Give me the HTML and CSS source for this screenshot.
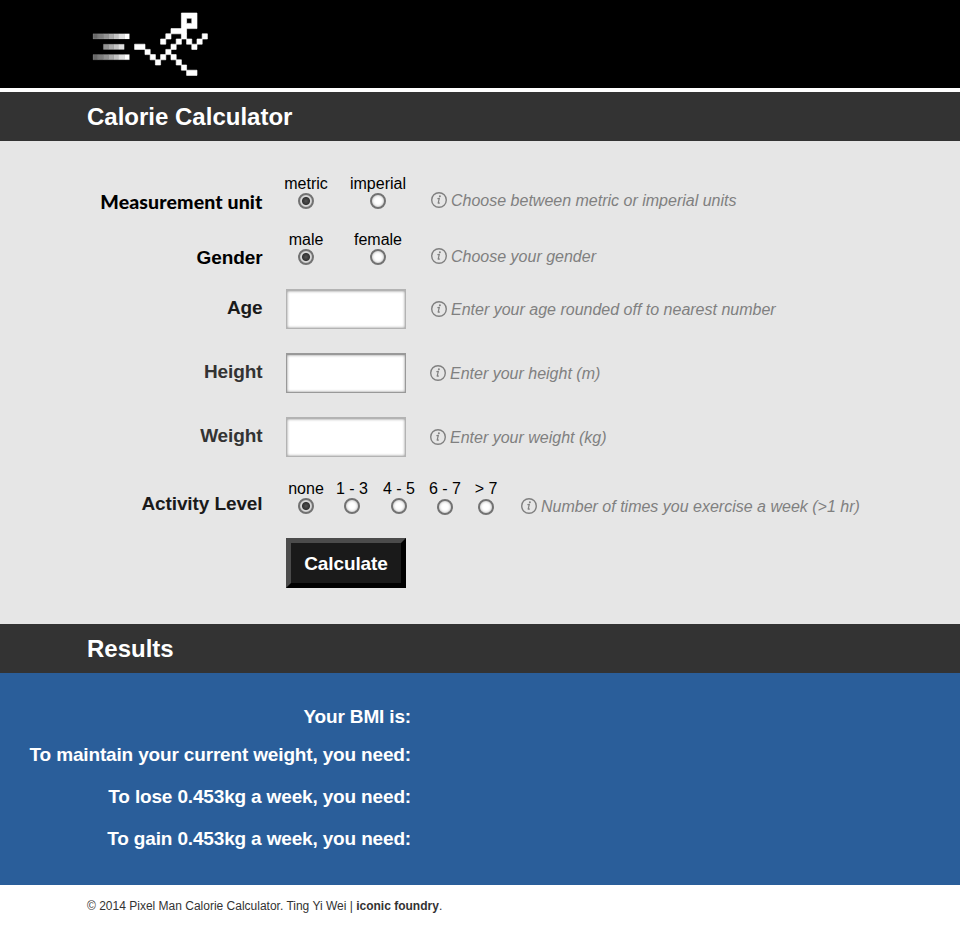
FILE: index.html
```html
<!DOCTYPE html>
<html lang="en">
<head>
<meta charset="utf-8">
<title>Calorie Calculator</title>
<link rel="stylesheet" href="styles.css">
</head>
<body>
<svg width="0" height="0" class="sprite" aria-hidden="true">
  <symbol id="info" viewBox="0 0 16 16">
    <circle cx="8" cy="8" r="7.3" fill="none" stroke="#808080" stroke-width="1.4"/>
    <path d="M6.4 6.7 8.3 6.4 7.2 10.8Q7 11.7 8.8 10.7" fill="none" stroke="#808080" stroke-width="1.2"/>
    <circle cx="8.9" cy="4.3" r="1" fill="#808080"/>
  </symbol>
</svg>
<header class="top">
  <svg class="logo" viewBox="-17 0 22 12" width="114.4" height="62.4">
    <g stroke="#fff" stroke-opacity=".25" stroke-width=".1">
      <path fill="#686868" d="M-17 4h1v1h-1zM-17 8h1v1h-1z"/>
      <path fill="#7c7c7c" d="M-16 4h1v1h-1zM-16 8h1v1h-1z"/>
      <path fill="#929292" d="M-15 4h1v1h-1zM-15 6h1v1h-1zM-15 8h1v1h-1z"/>
      <path fill="#a9a9a9" d="M-14 4h1v1h-1zM-14 6h1v1h-1zM-14 8h1v1h-1z"/>
      <path fill="#c2c2c2" d="M-13 4h1v1h-1zM-13 6h1v1h-1zM-13 8h1v1h-1z"/>
      <path fill="#dedede" d="M-12 4h1v1h-1zM-12 6h1v1h-1zM-12 8h1v1h-1z"/>
      <path fill="#fff" d="M-11 4h1v1h-1zM-11 8h1v1h-1z"/>
    </g>
    <path fill="#fff" stroke="#fff" stroke-width=".12" fill-rule="evenodd" d="M0 0h3v3h-3zM1 1v1h1v-1zM-2 3h3v1h-3zM-3 4h1v1h-1zM0 4h1v1h-1zM4 4h1v1h-1zM-4 5h1v1h-1zM-1 5h1v1h-1zM1 5h1v1h-1zM3 5h1v1h-1zM-9 6h2v1h-2zM-2 6h1v1h-1zM2 6h1v1h-1zM-7 7h1v1h-1zM-3 7h1v1h-1zM-6 8h1v1h-1zM-4 8h1v1h-1zM-2 8h1v1h-1zM-5 9h1v1h-1zM-1 9h1v1h-1zM0 10h1v1h-1zM1 11h2v1h-2z"/>
  </svg>
</header>
<h1 class="bar">Calorie Calculator</h1>
<form class="form">
  <div class="row row-unit">
    <span class="label label-geo">Measurement unit</span>
    <div class="options">
      <label class="option">metric<input type="radio" name="unit" checked></label>
      <label class="option">imperial<input type="radio" name="unit"></label>
    </div>
    <p class="hint"><svg class="info"><use href="#info"/></svg>Choose between metric or imperial units</p>
  </div>
  <div class="row row-gender">
    <span class="label">Gender</span>
    <div class="options">
      <label class="option">male<input type="radio" name="gender" checked></label>
      <label class="option">female<input type="radio" name="gender"></label>
    </div>
    <p class="hint"><svg class="info"><use href="#info"/></svg>Choose your gender</p>
  </div>
  <div class="row row-field">
    <label class="label label-dark" for="age">Age</label>
    <input class="field" id="age" type="text">
    <p class="hint"><svg class="info"><use href="#info"/></svg>Enter your age rounded off to nearest number</p>
  </div>
  <div class="row row-field">
    <label class="label label-soft" for="height">Height</label>
    <input class="field field-strong" id="height" type="text">
    <p class="hint hint-near"><svg class="info"><use href="#info"/></svg>Enter your height (m)</p>
  </div>
  <div class="row row-field">
    <label class="label label-soft" for="weight">Weight</label>
    <input class="field" id="weight" type="text">
    <p class="hint hint-near"><svg class="info"><use href="#info"/></svg>Enter your weight (kg)</p>
  </div>
  <div class="row row-activity">
    <span class="label label-dark">Activity Level</span>
    <div class="options options-activity">
      <label class="option">none<input type="radio" name="act" checked></label>
      <label class="option">1 - 3<input type="radio" name="act"></label>
      <label class="option">4 - 5<input type="radio" name="act"></label>
      <label class="option option-low">6 - 7<input type="radio" name="act"></label>
      <label class="option option-low">&gt; 7<input type="radio" name="act"></label>
    </div>
    <p class="hint"><svg class="info"><use href="#info"/></svg>Number of times you exercise a week (&gt;1 hr)</p>
  </div>
  <button class="calc" type="button">Calculate</button>
</form>
<h2 class="bar">Results</h2>
<section class="results">
  <p>Your BMI is:</p>
  <p>To maintain your current weight, you need:</p>
  <p>To lose 0.453kg a week, you need:</p>
  <p>To gain 0.453kg a week, you need:</p>
</section>
<footer class="foot">© 2014 Pixel Man Calorie Calculator. Ting Yi Wei | <strong>iconic foundry</strong>.</footer>
</body>
</html>
```
FILE: styles.css
```css
* { box-sizing: border-box; }
body {
  margin: 0;
  background: #fff;
  color: #000;
  font: 16px/18px "Liberation Sans", Arial, sans-serif;
}
p { margin: 0; }
.sprite { display: block; }
.top {
  height: 88px;
  margin-bottom: 4px;
  padding: 12.6px 0 0 92.8px;
  background: #000;
}
.logo { display: block; overflow: visible; }
.bar {
  height: 49px;
  margin: 0;
  padding-left: 87px;
  background: #333;
  color: #fff;
  font-size: 24px;
  line-height: 50px;
}
.form {
  height: 483px;
  padding-top: 34px;
  background: #e6e6e6;
}
.row {
  display: flex;
  align-items: flex-start;
  white-space: nowrap;
}
.row-unit { height: 56px; }
.row-gender { height: 58px; }
.row-field { height: 64px; }
.row-activity { height: 57px; }
.label {
  width: 262.5px;
  margin-right: -.5px;
  text-align: right;
  font-size: 19px;
  letter-spacing: -.1px;
  font-weight: bold;
  line-height: 22px;
}
.row-unit .label { margin-top: 16px; }
.row-gender .label { margin-top: 16px; }
.row-field .label { margin-top: 8px; }
.row-activity .label { margin-top: 12px; }
.label-geo {
  font-family: Lato, "Liberation Sans", sans-serif;
  font-size: 19.5px;
  letter-spacing: .12px;
  font-weight: 900;
}
.label-dark { color: #1a1a1a; }
.label-soft { color: #333; }
.options {
  display: grid;
  grid-template-columns: 72px 72px;
  width: 168px;
  padding-left: 8px;
}
.options-activity {
  grid-template-columns: 46px 46px 48px 44px 38px;
  width: 258px;
  padding-left: 21px;
  margin-top: -1px;
}
.option {
  display: flex;
  flex-direction: column;
  align-items: center;
}
input[type="radio"] {
  appearance: none;
  width: 16px;
  height: 16px;
  margin: 0;
  border: 2px solid #727272;
  border-radius: 50%;
  background: #fff;
  box-shadow: inset 0 0 3px #aaa;
}
input[type="radio"]:checked {
  background: radial-gradient(circle, #555 0, #303030 3.6px, #eee 4.6px, #ddd 7px) border-box;
}
.option-low input[type="radio"] { margin-top: 1px; }
.field {
  width: 120px;
  height: 40px;
  margin: 0 24px;
  border: 1px solid #b3b3b3;
  border-top-width: 2px;
  background: #fff;
  box-shadow: inset 0 0 3px #888;
}
.field-strong { border-color: #999; }
.hint {
  display: flex;
  gap: 4px;
  margin-left: 1px;
  color: #808080;
  font-style: italic;
}
.row-unit .hint, .row-gender .hint { margin-top: 17px; }
.row-field .hint { margin-top: 12px; }
.row-activity .hint { margin-top: 17px; }
.hint-near { margin-left: 0; }
.info { width: 16px; height: 16px; flex: none; }
.calc {
  display: block;
  width: 120px;
  height: 50px;
  margin-left: 286px;
  padding: 1px 0 0;
  border: 5px solid;
  border-color: #4b4b4b #000 #000 #4b4b4b;
  background: #1a1a1a;
  color: #fff;
  font: bold 19px/22px "Liberation Sans", Arial, sans-serif;
  letter-spacing: -.1px;
}
.results {
  display: flex;
  flex-direction: column;
  gap: 20px;
  width: 100%;
  height: 212px;
  padding-top: 33px;
  background: #2a5e9a;
  color: #fff;
  font-size: 19px;
  letter-spacing: -.16px;
  font-weight: bold;
  line-height: 22px;
}
.results p { width: 411px; text-align: right; }
.results p:first-child { margin-bottom: -4px; }
.foot {
  padding: 13px 0 0 87px;
  color: #333;
  font-size: 12px;
  line-height: 16px;
}
```
